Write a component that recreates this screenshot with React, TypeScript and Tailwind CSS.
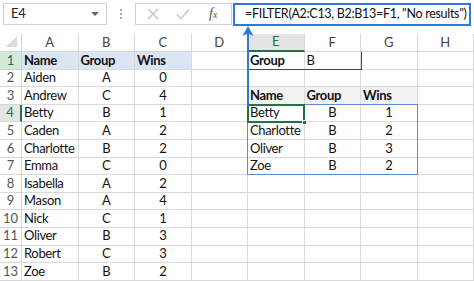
import React from "react";

const cols = ["A", "B", "C", "D", "E", "F", "G", "H"];

type Align = "left" | "center";
type CellData = { text?: string; bold?: boolean; align?: Align; bg?: string };

const names = ["Aiden", "Andrew", "Betty", "Caden", "Charlotte", "Emma", "Isabella", "Mason", "Nick", "Oliver", "Robert", "Zoe"];
const groups = ["A", "C", "B", "A", "B", "C", "A", "A", "C", "B", "C", "B"];
const wins = ["0", "4", "1", "2", "2", "0", "2", "4", "1", "3", "3", "2"];

const result = [
  ["Betty", "B", "1"],
  ["Charlotte", "B", "2"],
  ["Oliver", "B", "3"],
  ["Zoe", "B", "2"],
];

function buildRows(): CellData[][] {
  const rows: CellData[][] = [];
  for (let r = 1; r <= 13; r++) {
    const row: CellData[] = cols.map(() => ({}));
    if (r === 1) {
      row[0] = { text: "Name", bold: true, bg: "bg-[#dce5f3]" };
      row[1] = { text: "Group", bold: true, bg: "bg-[#dce5f3]" };
      row[2] = { text: "Wins", bold: true, bg: "bg-[#dce5f3]" };
      row[4] = { text: "Group", bold: true };
      row[5] = { text: "B" };
    } else {
      row[0] = { text: names[r - 2] };
      row[1] = { text: groups[r - 2], align: "center" };
      row[2] = { text: wins[r - 2], align: "center" };
    }
    if (r === 3) {
      row[4] = { text: "Name", bold: true, bg: "bg-[#f2f2f2]" };
      row[5] = { text: "Group", bold: true, bg: "bg-[#f2f2f2]" };
      row[6] = { text: "Wins", bold: true, bg: "bg-[#f2f2f2]" };
    }
    if (r >= 4 && r <= 7) {
      const d = result[r - 4];
      row[4] = { text: d[0] };
      row[5] = { text: d[1], align: "center" };
      row[6] = { text: d[2], align: "center" };
    }
    rows.push(row);
  }
  return rows;
}

const Toolbar = () => (
  <div className="flex items-start h-[34px] pt-[3px] pl-[3px]">
    {/* Name box */}
    <div className="w-[104px] h-[22px] border border-[#d0d0d0] flex items-center justify-between pl-[7px] pr-[7px] text-[13px] tracking-[-0.2px] text-[#222]">
      <span>E4</span>
      <span className="w-0 h-0 border-l-[4px] border-r-[4px] border-t-[4px] border-l-transparent border-r-transparent border-t-[#666]" />
    </div>
    <div className="w-[28px] h-[22px] flex flex-col items-center justify-center gap-[2px]">
      <span className="w-[2px] h-[2px] bg-[#aaa]" />
      <span className="w-[2px] h-[2px] bg-[#aaa]" />
      <span className="w-[2px] h-[2px] bg-[#aaa]" />
    </div>
    {/* Cancel / Enter / fx */}
    <div className="w-[97px] h-[22px] border border-[#d0d0d0] flex items-center pl-[11px] gap-[17px]">
      <svg width="12" height="12" viewBox="0 0 12 12">
        <path d="M1 1L11 11M11 1L1 11" stroke="#c4c4c4" strokeWidth="1.4" />
      </svg>
      <svg width="14" height="12" viewBox="0 0 14 12">
        <path d="M1 6.5L5 10.5L13 1.5" stroke="#c4c4c4" strokeWidth="1.4" fill="none" />
      </svg>
      <span className="ml-[2px] text-[14px] italic text-[#555] font-['Liberation_Serif',serif] leading-none">
        f<span className="text-[10px]">x</span>
      </span>
    </div>
    {/* Formula bar */}
    <div className="ml-[1px] w-[238px] h-[23px] border-2 border-[#2e78d6] flex items-center pl-[10px] text-[12.5px] tracking-[-0.3px] text-[#111] whitespace-nowrap">
      =FILTER(A2:C13, B2:B13=F1, "No results")
    </div>
  </div>
);

export default function App() {
  const rows = buildRows();
  return (
    <div className="relative w-[474px] h-[281px] overflow-hidden bg-white font-['Lato','Liberation_Sans',sans-serif]">
      <Toolbar />
      <div className="grid grid-cols-[22px_repeat(8,56.5px)] grid-rows-[18px_repeat(13,17.6px)]">
        {/* corner */}
        <div className="flex items-end justify-end pr-[4px] pb-[4px] border-r border-b border-[#d6d6d6]">
          <svg width="11" height="11" viewBox="0 0 11 11">
            <path d="M11 0V11H0Z" fill="#dcdcdc" />
          </svg>
        </div>
        {cols.map((c) =>
          c === "E" ? (
            <div key={c} className="flex items-center justify-center bg-[#e4e4e4] border-r border-[#d6d6d6] border-b-2 border-b-[#217346] text-[13px] text-[#217346]">
              {c}
            </div>
          ) : (
            <div key={c} className="flex items-center justify-center border-r border-b border-[#d6d6d6] text-[13px] text-[#444]">
              {c}
            </div>
          )
        )}
        {rows.map((row, i) => {
          const r = i + 1;
          const head =
            r === 1 ? (
              <div key={`h${r}`} className="flex items-center justify-center bg-[#d2ead9] border-r border-b border-[#c9d6cc] text-[13px] text-[#217346]">
                {r}
              </div>
            ) : r === 4 ? (
              <div key={`h${r}`} className="flex items-center justify-center bg-[#e4e4e4] border-r-2 border-r-[#217346] border-b border-b-[#d6d6d6] text-[13px] text-[#217346]">
                {r}
              </div>
            ) : (
              <div key={`h${r}`} className="flex items-center justify-center border-r border-b border-[#d6d6d6] text-[13px] text-[#555]">
                {r}
              </div>
            );
          return (
            <React.Fragment key={r}>
              {head}
              {row.map((cell, j) => (
                <div
                  key={j}
                  className={`flex items-center px-[2px] border-r border-b border-[#dadada] text-[13px] tracking-[-0.35px] text-[#111] whitespace-nowrap overflow-visible ${cell.bg ?? ""} ${cell.bold ? "font-bold" : ""} ${cell.align === "center" ? "justify-center" : "justify-start"}`}
                >
                  {cell.text}
                </div>
              ))}
            </React.Fragment>
          );
        })}
      </div>

      {/* E1:F1 outline */}
      <div className="absolute left-[248px] top-[52px] w-[113.5px] h-[17.6px] border-r border-b border-[#444] pointer-events-none" />
      {/* Result spill range E4:G7 */}
      <div className="absolute left-[247px] top-[104px] w-[171px] h-[71px] border border-[#5b8fd3] pointer-events-none" />
      {/* Active cell E4 */}
      <div className="absolute left-[247px] top-[104px] w-[58px] h-[19px] border-2 border-[#217346] pointer-events-none" />
      <div className="absolute left-[302px] top-[120px] w-[5px] h-[5px] bg-[#217346] border border-white pointer-events-none" />

      {/* Arrow from formula bar */}
      <svg className="absolute left-[241px] top-[26px] pointer-events-none" width="14" height="80" viewBox="0 0 14 80">
        <path d="M7 4V80" stroke="#2e78d6" strokeWidth="2" />
        <path d="M7 0L12.5 10L7 7.5L1.5 10Z" fill="#2e78d6" />
      </svg>
    </div>
  );
}
